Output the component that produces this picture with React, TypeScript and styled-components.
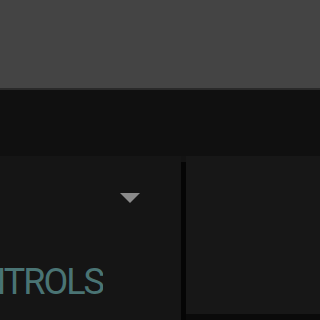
import React from "react";
import styled, { createGlobalStyle } from "styled-components";

const Global = createGlobalStyle`
  html, body { margin: 0; padding: 0; background: #101010; }
  body { width: 320px; height: 320px; overflow: hidden; font-family: Roboto, "Liberation Sans", sans-serif; }
`;

const Page = styled.div`
  width: 320px;
  height: 320px;
  display: flex;
  flex-direction: column;
  background: #101010;
`;

const TopBar = styled.div`
  height: 88px;
  background: #444444;
  border-bottom: 2px solid #2a2a2a;
  flex: none;
`;

const Band = styled.div`
  height: 66px;
  background: #101010;
  flex: none;
`;

const Body = styled.div`
  flex: 1;
  display: flex;
  background: #131313;
`;

const LeftPanel = styled.div`
  width: 181px;
  background: #151515;
  display: flex;
  flex-direction: column;
  padding-top: 37px;
`;

const DropRow = styled.div`
  display: flex;
  justify-content: flex-end;
  padding-right: 41px;
  height: 12px;
`;

const Caret = styled.div`
  width: 0;
  height: 0;
  border-left: 10px solid transparent;
  border-right: 10px solid transparent;
  border-top: 10px solid #8a8a8a;
`;

const TitleClip = styled.div`
  margin-top: 57px;
  width: 103px;
  overflow: hidden;
  display: flex;
  justify-content: flex-end;
`;

const Title = styled.div`
  font-family: Roboto, "Liberation Sans", sans-serif;
  font-size: 36px;
  line-height: 40px;
  letter-spacing: -2px;
  color: #4a7474;
  white-space: nowrap;
  flex: none;
`;

const Divider = styled.div`
  width: 5px;
  background: #050505;
  margin-top: 6px;
`;

const RightCol = styled.div`
  flex: 1;
  display: flex;
  flex-direction: column;
  background: #0a0a0a;
`;

const RightPanel = styled.div`
  height: 158px;
  background: #171717;
`;

export default function App() {
  return (
    <>
      <Global />
      <Page>
        <TopBar />
        <Band />
        <Body>
          <LeftPanel>
            <DropRow>
              <Caret />
            </DropRow>
            <TitleClip>
              <Title>CONTROLS</Title>
            </TitleClip>
          </LeftPanel>
          <Divider />
          <RightCol>
            <RightPanel />
          </RightCol>
        </Body>
      </Page>
    </>
  );
}
